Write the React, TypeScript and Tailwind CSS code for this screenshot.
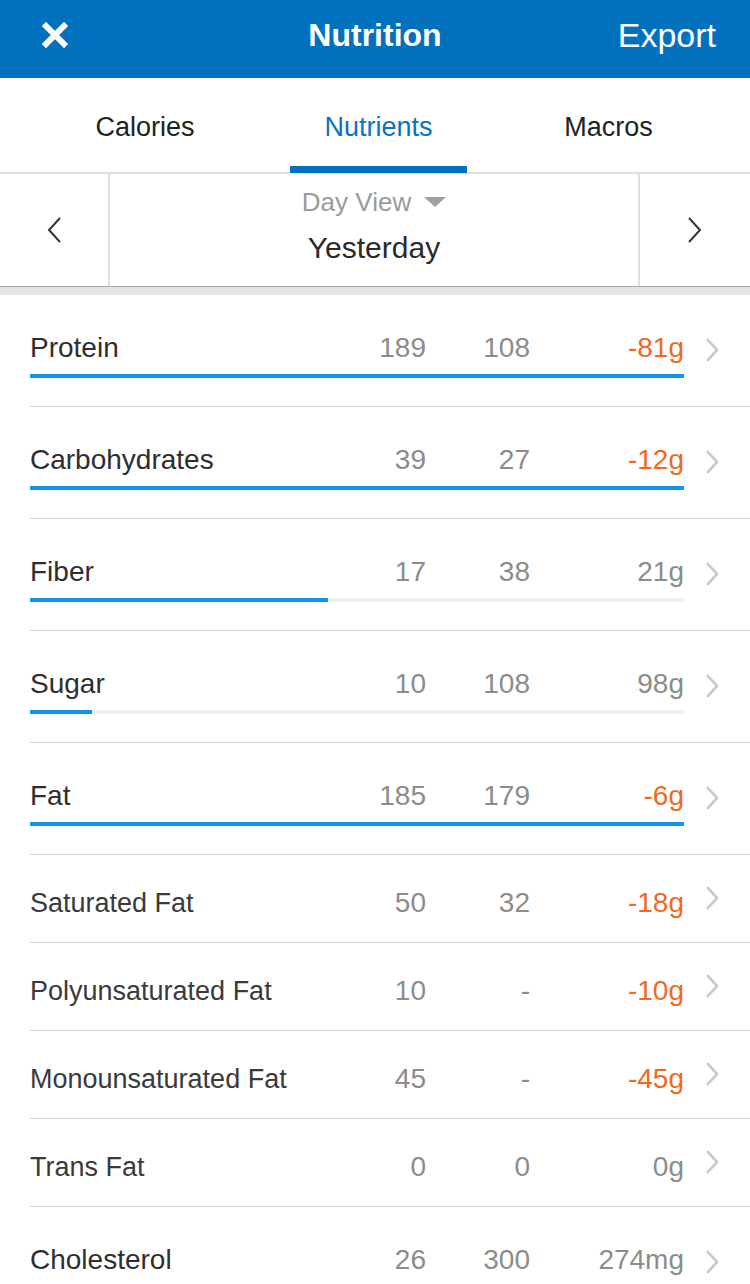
import React from "react";

const ORANGE = "text-[#f0691c]";

type Row = {
  name: string;
  a: string;
  b: string;
  c: string;
  over: boolean;
  big: boolean;
  bar?: number;
};

const rows: Row[] = [
  { name: "Protein", a: "189", b: "108", c: "-81g", over: true, big: true, bar: 654 },
  { name: "Carbohydrates", a: "39", b: "27", c: "-12g", over: true, big: true, bar: 654 },
  { name: "Fiber", a: "17", b: "38", c: "21g", over: false, big: true, bar: 298 },
  { name: "Sugar", a: "10", b: "108", c: "98g", over: false, big: true, bar: 62 },
  { name: "Fat", a: "185", b: "179", c: "-6g", over: true, big: true, bar: 654 },
  { name: "Saturated Fat", a: "50", b: "32", c: "-18g", over: true, big: false },
  { name: "Polyunsaturated Fat", a: "10", b: "-", c: "-10g", over: true, big: false },
  { name: "Monounsaturated Fat", a: "45", b: "-", c: "-45g", over: true, big: false },
  { name: "Trans Fat", a: "0", b: "0", c: "0g", over: false, big: false },
  { name: "Cholesterol", a: "26", b: "300", c: "274mg", over: false, big: true, bar: 25 },
];

function Chevron() {
  return (
    <svg width="16" height="26" viewBox="0 0 16 26">
      <path d="M3 2 L13 13 L3 24" fill="none" stroke="#c7c7cc" strokeWidth="2.6" />
    </svg>
  );
}

function NutrientRow({ r }: { r: Row }) {
  return (
    <div
      className={`border-b border-[#cfcfcf] ml-[30px] flex flex-col ${
        r.big ? "h-[112px] pt-[32px]" : "h-[88px] justify-center"
      }`}
    >
      <div className={`flex items-center h-[42px] ${r.big ? "" : "mt-[9px]"}`}>
        <div
          className={`flex-1 ${r.big ? "text-[28px] text-[#2e2e2e]" : "text-[27px] text-[#3a3a3a]"}`}
        >
          {r.name}
        </div>
        <div className="w-[100px] text-right text-[28px] text-[#8c8c8c]">{r.a}</div>
        <div className="w-[104px] text-right text-[28px] text-[#8c8c8c]">{r.b}</div>
        <div
          className={`w-[154px] text-right text-[28px] ${r.over ? ORANGE : "text-[#8c8c8c]"}`}
        >
          {r.c}
        </div>
        <div className={`w-[66px] flex pl-[20px] ${r.big ? "pt-[4px]" : "-mt-[10px]"}`}>
          <Chevron />
        </div>
      </div>
      {r.big && (
        <div className="mt-[5px] w-[654px] h-[4px] bg-[#efeff1]">
          <div className="h-full bg-[#1196e8]" style={{ width: `${r.bar}px` }} />
        </div>
      )}
    </div>
  );
}

export default function App() {
  return (
    <div
      className="w-[750px] h-[1284px] overflow-hidden bg-white"
      style={{ fontFamily: '"Liberation Sans", Arial, sans-serif' }}
    >
      {/* Header */}
      <div className="h-[78px] bg-[#0271bd] flex items-center text-white pb-[8px]">
        <div className="w-[140px] flex pl-[42px]">
          <svg width="26" height="26" viewBox="0 0 26 26">
            <path d="M4 4 L22 22 M22 4 L4 22" stroke="white" strokeWidth="6" strokeLinecap="square" />
          </svg>
        </div>
        <div className="flex-1 text-center text-[32px] font-bold">Nutrition</div>
        <div className="w-[140px] text-right pr-[34px] text-[34px]">Export</div>
      </div>

      {/* Tabs */}
      <div className="h-[96px] flex border-b-2 border-[#e0e0e0]">
        <div className="w-[290px] flex items-center justify-center text-[27px] text-[#222] pt-[4px]">
          Calories
        </div>
        <div className="w-[177px] flex flex-col">
          <div className="flex-1 flex items-center justify-center text-[27px] text-[#0b72c0] pt-[11px]">
            Nutrients
          </div>
          <div className="h-[7px] bg-[#0271bd] -mb-[1px]" />
        </div>
        <div className="flex-1 flex items-center justify-center text-[27px] text-[#222] pt-[4px]">
          Macros
        </div>
      </div>

      {/* Date nav */}
      <div className="h-[112px] flex">
        <div className="w-[110px] flex items-center justify-center border-r-2 border-[#e0e0e0]">
          <svg width="16" height="28" viewBox="0 0 16 28">
            <path d="M14 2 L3 14 L14 26" fill="none" stroke="#333" strokeWidth="2" />
          </svg>
        </div>
        <div className="flex-1 flex flex-col items-center pt-[12px]">
          <div className="flex items-center text-[26px] text-[#9b9b9b] h-[32px]">
            <span>Day View</span>
            <svg width="22" height="12" viewBox="0 0 22 12" className="ml-[13px]">
              <path d="M0 1 L22 1 L11 11 Z" fill="#a0a0a0" />
            </svg>
          </div>
          <div className="text-[30px] text-[#2a2a2a] mt-[7px]">Yesterday</div>
        </div>
        <div className="w-[112px] flex items-center justify-center border-l-2 border-[#e0e0e0]">
          <svg width="16" height="28" viewBox="0 0 16 28">
            <path d="M2 2 L13 14 L2 26" fill="none" stroke="#333" strokeWidth="2" />
          </svg>
        </div>
      </div>

      {/* Separator band */}
      <div className="h-[9px] bg-[#e4e4e4] border-t border-[#a9a9a9]" />

      {/* Rows */}
      <div>
        {rows.map((r) => (
          <NutrientRow key={r.name} r={r} />
        ))}
      </div>
    </div>
  );
}
